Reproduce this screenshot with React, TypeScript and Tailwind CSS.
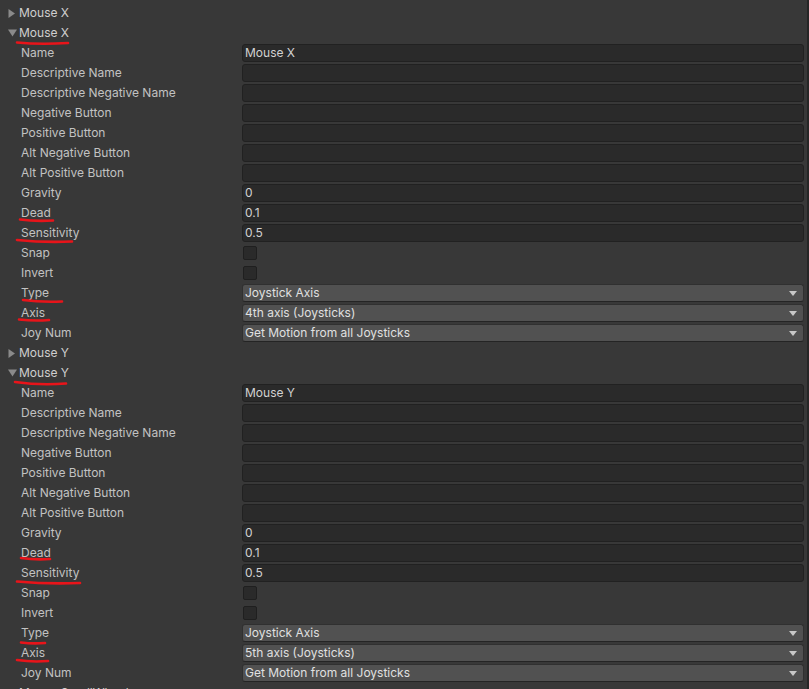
import React from "react";

type Field =
  | { label: string; kind: "text"; value?: string }
  | { label: string; kind: "check" }
  | { label: string; kind: "select"; value: string };

function fields(name: string, axis: string): Field[] {
  return [
    { label: "Name", kind: "text", value: name },
    { label: "Descriptive Name", kind: "text" },
    { label: "Descriptive Negative Name", kind: "text" },
    { label: "Negative Button", kind: "text" },
    { label: "Positive Button", kind: "text" },
    { label: "Alt Negative Button", kind: "text" },
    { label: "Alt Positive Button", kind: "text" },
    { label: "Gravity", kind: "text", value: "0" },
    { label: "Dead", kind: "text", value: "0.1" },
    { label: "Sensitivity", kind: "text", value: "0.5" },
    { label: "Snap", kind: "check" },
    { label: "Invert", kind: "check" },
    { label: "Type", kind: "select", value: "Joystick Axis" },
    { label: "Axis", kind: "select", value: axis },
    { label: "Joy Num", kind: "select", value: "Get Motion from all Joysticks" },
  ];
}

function Header({ text, open }: { text: string; open: boolean }) {
  return (
    <div className="h-5 shrink-0 flex items-center">
      <div className="w-[19px] flex items-center justify-start pl-[8px]">
        {open ? (
          <svg width="9" height="8" viewBox="0 0 9 8">
            <path d="M0 0.5 L9 0.5 L4.5 7.5 Z" fill="#8a8a8a" />
          </svg>
        ) : (
          <svg width="8" height="9" viewBox="0 0 8 9">
            <path d="M0.5 0 L7 4.5 L0.5 9 Z" fill="#8a8a8a" />
          </svg>
        )}
      </div>
      <span className="text-[#cfcfcf]">{text}</span>
    </div>
  );
}

function Row({ f }: { f: Field }) {
  return (
    <div className="h-5 shrink-0 flex items-center">
      <div className="w-[242px] pl-[21px] text-[#c2c2c2] shrink-0">{f.label}</div>
      <div className="flex-1 mr-[3px] flex items-center">
        {f.kind === "text" && (
          <div className="h-[18px] w-full bg-[#2a2a2a] border border-[#212121] rounded-[3px] px-[2px] flex items-center text-[#d2d2d2]">
            {f.value ?? ""}
          </div>
        )}
        {f.kind === "check" && (
          <div className="ml-[1px] w-[14px] h-[14px] bg-[#2a2a2a] border border-[#1f1f1f] rounded-[2px]" />
        )}
        {f.kind === "select" && (
          <div className="h-[18px] w-full bg-[#515151] border border-[#303030] border-b-[#242424] rounded-[3px] pl-[2px] pr-[6px] flex items-center justify-between text-[#e0e0e0]">
            <span>{f.value}</span>
            <svg width="8" height="5" viewBox="0 0 8 5">
              <path d="M0 0 L8 0 L4 5 Z" fill="#c8c8c8" />
            </svg>
          </div>
        )}
      </div>
    </div>
  );
}

export default function App() {
  const underlines = [
    "M17 42.5 Q40 44.8 68 43",
    "M20 219.5 Q35 221.5 53 220.5",
    "M17 240 Q45 242.8 72 241.5",
    "M23 300 Q40 302.3 62 301.5",
    "M19 319.5 Q35 321.3 49 320",
    "M15 382 Q40 385.5 66 383.5",
    "M21 558 Q35 560 50 559",
    "M17 581.5 Q48 584.3 80 583",
    "M21 642.5 Q33 644 45 643",
    "M17 660 Q32 662.3 48 661",
  ];
  return (
    <div
      className="relative w-full h-[689px] overflow-hidden bg-[#383838] text-[12px] leading-none flex"
      style={{ fontFamily: "Inter, 'Noto Sans', sans-serif" }}
    >
      <div className="flex-1 pt-[3px] flex flex-col">
        <Header text="Mouse X" open={false} />
        <Header text="Mouse X" open={true} />
        {fields("Mouse X", "4th axis (Joysticks)").map((f, i) => (
          <Row key={"x" + i} f={f} />
        ))}
        <Header text="Mouse Y" open={false} />
        <Header text="Mouse Y" open={true} />
        {fields("Mouse Y", "5th axis (Joysticks)").map((f, i) => (
          <Row key={"y" + i} f={f} />
        ))}
        <Header text="Mouse ScrollWheel" open={false} />
      </div>
      <div className="w-[2px] bg-[#262626]" />
      <svg
        className="absolute left-0 top-0 pointer-events-none"
        width="809"
        height="689"
        viewBox="0 0 809 689"
      >
        {underlines.map((d, i) => (
          <path key={i} d={d} stroke="#e8141a" strokeWidth="2.6" fill="none" strokeLinecap="round" />
        ))}
      </svg>
    </div>
  );
}
